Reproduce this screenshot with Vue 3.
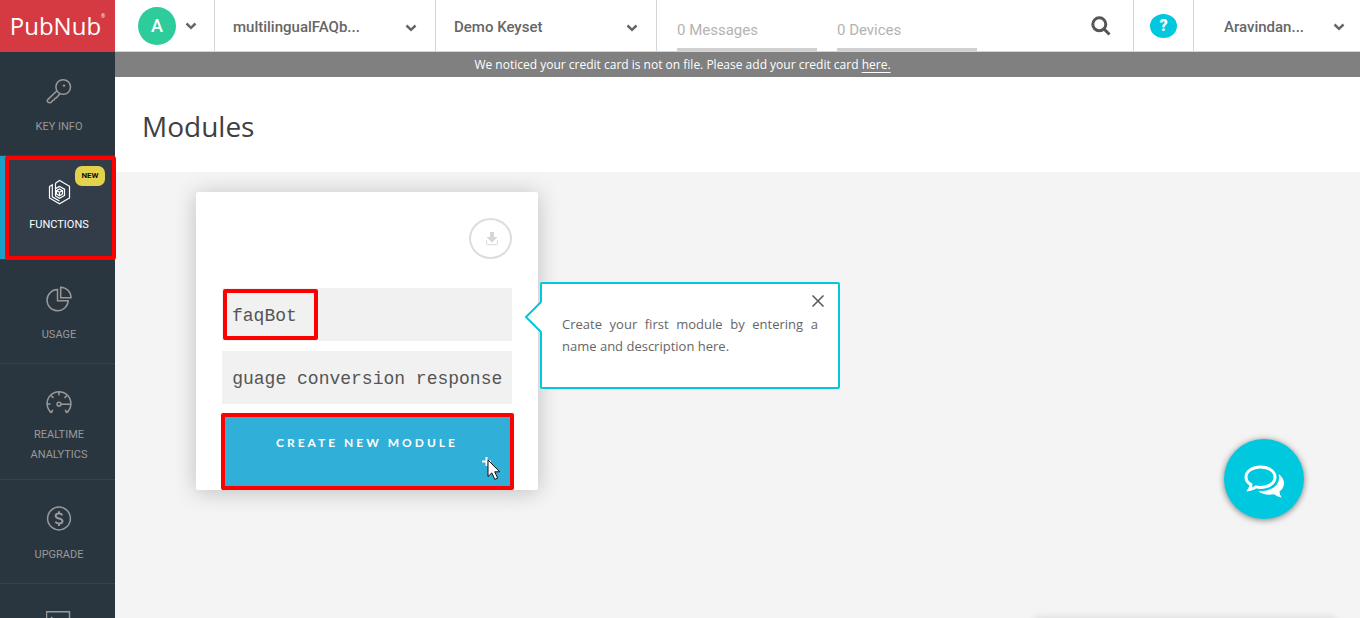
<script setup>
import { onMounted, ref } from 'vue'

const appName = ref('multilingualFAQb...')
const keyset = ref('Demo Keyset')
const moduleName = ref('faqBot')
const description = ref('Multi language conversion response')
const descriptionField = ref(null)
const tipOpen = ref(true)

const metrics = ['0 Messages', '0 Devices']

// Keep the end of a long description in view.
onMounted(() => {
  descriptionField.value.scrollLeft = descriptionField.value.scrollWidth
})
</script>

<template>
  <div class="shell">
    <aside class="sidebar">
      <a class="logo" href="#">PubNub<sup>®</sup></a>
      <nav>
        <a class="item" href="#">
          <svg class="icon" viewBox="0 0 26 26">
            <circle cx="17.2" cy="9" r="7.3" />
            <circle cx="18" cy="7.6" r="1.2" class="solid" />
            <path d="M11 12.8 2 21.4c-1.3 1.3-.7 3 .8 3.2 1.3.2 2 .2 2.7-.5l1.2-1.700 1.3-.4 1-1.700 1.400-.5 3.700-4.200" />
          </svg>
          <span>KEY INFO</span>
        </a>
        <a class="item active tight" href="#">
          <svg class="icon" viewBox="0 0 26 26">
            <path d="M9.500 4.200V17l4 2.300 5-2.800v-6.300l-5-2.800-4 2.200M9.500 4.200 13.500 1.500 23.500 7.300v11.600l-10 5.800L3.500 19V7.500l2.800-1.700v12l7.200 4.100" />
            <path d="m13.500 10 3 1.600v3.400l-3 1.700-3-1.700v-3.400zM10.500 11.600l3 1.700 3-1.700M13.500 13.300v3.400" />
          </svg>
          <span>FUNCTIONS</span>
          <b class="badge">NEW</b>
        </a>
        <a class="item" href="#">
          <svg class="icon" viewBox="0 0 26 26">
            <path d="M11.500 3.600A10.600 10.600 0 1 0 22.200 14.800H11.500z" />
            <path d="M14.700 1.200v10.500H25A10.500 10.500 0 0 0 14.700 1.200z" />
          </svg>
          <span>USAGE</span>
        </a>
        <a class="item mid" href="#">
          <svg class="icon" viewBox="0 0 26 26">
            <path d="M5.500 22.800A11.900 11.900 0 1 1 20.500 22.800M13 2v3.500M5.300 5.700l2.200 2.200M20.700 5.700l-2.200 2.200M1.200 14h3.300M5.500 22.800l1.200-3M20.500 22.800l-1.200-3M15 14.200h10" />
            <circle cx="13" cy="14.200" r="1.900" />
          </svg>
          <span>REALTIME ANALYTICS</span>
        </a>
        <a class="item" href="#">
          <svg class="icon" viewBox="0 0 26 26">
            <circle cx="13" cy="12.500" r="11.400" />
            <path class="bold" d="M16.300 9.400c-.6-1.200-1.800-1.800-3.300-1.800-2 0-3.300.9-3.300 2.400 0 3.400 6.800 1.600 6.800 5.100 0 1.500-1.400 2.500-3.500 2.500-1.700 0-3-.6-3.600-1.900M13 5.300v2.300M13 17.500v2.400" />
          </svg>
          <span>UPGRADE</span>
        </a>
        <a class="item" href="#" aria-label="Console">
          <svg class="icon" viewBox="0 0 26 26">
            <path d="M.5 1.700h23v18H.5zM5 7l3 3-3 3" />
          </svg>
        </a>
      </nav>
    </aside>

    <div class="page">
      <header class="topbar">
        <button class="user" aria-label="Profile">
          <span class="avatar">A</span>
          <svg class="chevron" viewBox="0 0 12 8"><path d="m1.500 1.500 4.500 4.300 4.500-4.300" /></svg>
        </button>
        <div class="picker">
          <select v-model="appName" aria-label="App"><option>multilingualFAQb...</option></select>
          <svg class="chevron" viewBox="0 0 12 8"><path d="m1.500 1.500 4.500 4.300 4.500-4.300" /></svg>
        </div>
        <div class="picker">
          <select v-model="keyset" aria-label="Keyset"><option>Demo Keyset</option></select>
          <svg class="chevron" viewBox="0 0 12 8"><path d="m1.500 1.500 4.500 4.300 4.500-4.300" /></svg>
        </div>
        <div class="metrics">
          <div v-for="m in metrics" :key="m" class="metric">{{ m }}</div>
        </div>
        <button class="search" aria-label="Search">
          <svg viewBox="0 0 20 20"><circle cx="8.300" cy="8.300" r="6.500" /><path d="m13 13 5.500 5.500" /></svg>
        </button>
        <button class="help" aria-label="Help"><span>?</span></button>
        <button class="account">
          Aravindan...
          <svg class="chevron" viewBox="0 0 12 8"><path d="m1.500 1.500 4.500 4.300 4.500-4.300" /></svg>
        </button>
      </header>

      <p class="notice">We noticed your credit card is not on file. Please add your credit card <a href="#">here.</a></p>

      <div class="title"><h1>Modules</h1></div>

      <main>
        <form class="card" @submit.prevent>
          <button type="button" class="import" aria-label="Import module">
            <svg viewBox="0 0 12 14">
              <path class="solid" d="M4 0h4v5h3.500L6 10.500.5 5H4z" />
              <path d="M.600 8.500v3.200q0 1 1 1h8.800q1 0 1-1V8.500" />
            </svg>
          </button>
          <div class="field marked-name">
            <input v-model="moduleName" aria-label="Module name" />
          </div>
          <div class="field">
            <input ref="descriptionField" v-model="description" aria-label="Module description" />
          </div>
          <button class="create">
            <span>CREATE NEW MODULE</span>
            <svg class="plus" viewBox="0 0 9 9"><path d="M4.500 0v9M0 4.500h9" /></svg>
            <svg class="cursor" viewBox="0 0 14 22">
              <path d="M1 1v16.500l3.800-3.600 3 6.500 2.900-1.300-3-6.300h5z" />
            </svg>
          </button>

          <div v-if="tipOpen" class="tip">
            <svg class="arrow" viewBox="0 0 18 30"><path class="fill" d="M18 0 2 15l16 15z" /><path d="M17 0 2 15l15 15" /></svg>
            <button type="button" class="close" aria-label="Close" @click="tipOpen = false">
              <svg viewBox="0 0 12 12"><path d="m.5.5 11 11M11.500.5l-11 11" /></svg>
            </button>
            <p>Create your first module by entering a name and description here.</p>
          </div>
        </form>
      </main>
    </div>

    <button class="chat" aria-label="Open chat">
      <svg viewBox="0 0 42 34">
        <path class="solid" d="M35.500 9c3.700 2.500 5.700 6 5.500 9.700-.2 3.300-2 6-4.500 8 .1 2 .9 3.800 2.200 5.800-3.300-.5-5.700-1.800-7.600-3.300-6 1.200-12 .2-15.800-2.900 11.500.5 23.500-5.500 20.200-17.300z" />
        <path d="M17.500 2c8.200 0 14.500 4.300 14.500 10.200s-6.300 10.200-14.500 10.200c-1.600 0-3-.1-4.500-.5-2 1.500-4.300 2.300-6.700 2.600 1-1.500 1.700-3.100 1.700-4.900C4.900 17.900 3 15.400 3 12.200 3 6.300 9.300 2 17.500 2z" />
      </svg>
    </button>
    <div class="dock"></div>
  </div>
</template>

<style>
body {
  margin: 0;
  background: #f4f4f4;
}
</style>

<style scoped>
*,
::after {
  box-sizing: border-box;
}
.shell {
  display: flex;
  height: 100vh;
  overflow: hidden;
  font-family: Roboto, "Liberation Sans", sans-serif;
  color: #555;
}
button,
select,
input {
  margin: 0;
  padding: 0;
  border: 0;
  border-radius: 0;
  background: none;
  color: inherit;
  font: inherit;
  outline: 0;
}
svg {
  display: block;
  fill: none;
  stroke: currentColor;
}
.solid {
  fill: currentColor;
  stroke: none;
}

/* Sidebar */
.sidebar {
  flex: none;
  width: 115px;
  background: #2a363f;
}
.logo {
  display: flex;
  justify-content: center;
  height: 52px;
  background: #d53a42;
  color: #fff;
  font: 24px/52px "Open Sans", sans-serif;
  text-decoration: none;
}
.logo sup {
  font-size: 5px;
  line-height: 32px;
}
.item {
  position: relative;
  display: flex;
  flex-direction: column;
  align-items: center;
  gap: 13px;
  min-height: 104px;
  padding: 26px 23px 14px 26px;
  border-bottom: 1px solid #35434d;
  color: #999;
  font-size: 11px;
  line-height: 20px;
  text-align: center;
  text-decoration: none;
}
.icon {
  width: 26px;
  height: 26px;
  stroke-width: 1.5;
}
.bold {
  stroke-width: 2;
}
.tight {
  gap: 10px;
  padding-top: 23px;
}
.mid {
  gap: 9px;
}
.active {
  background: #333d4a;
  box-shadow: inset 6px 0 #1b9fc7;
  color: #fff;
}
.active .icon {
  stroke-width: 1.2;
}
.active::after {
  content: "";
  position: absolute;
  inset: 0 -1px -1px 5px;
  border: 4px solid #fe0000;
  border-radius: 3px;
}
.badge {
  position: absolute;
  top: 10px;
  right: 10px;
  width: 30px;
  border-radius: 7px;
  background: #e3d24b;
  color: #111;
  font-size: 8px;
}

/* Top bar */
.page {
  flex: 1;
  min-width: 0;
}
.topbar {
  display: flex;
  height: 52px;
  border-bottom: 1px solid #d5d5d5;
  background: #fff;
  font-size: 15px;
  font-weight: 500;
  color: #666;
}
.chevron {
  flex: none;
  width: 12px;
  height: 8px;
  stroke-width: 2.5;
}
.user {
  display: flex;
  align-items: center;
  gap: 9px;
  width: 100px;
  padding-left: 23px;
  border-right: 1px solid #d5d5d5;
}
.avatar {
  width: 38px;
  border-radius: 50%;
  background: #2ecc9a;
  color: #fff;
  font-size: 18px;
  line-height: 38px;
}
.picker {
  position: relative;
  width: 221px;
  border-right: 1px solid #d5d5d5;
}
.picker select {
  width: 100%;
  height: 100%;
  padding: 2px 40px 0 18px;
  appearance: none;
}
.picker .chevron {
  position: absolute;
  top: 24px;
  right: 18px;
  pointer-events: none;
}
.metrics {
  display: flex;
  flex: 1;
  gap: 20px;
  padding-left: 20px;
}
.metric {
  width: 140px;
  padding-top: 9px;
  border-bottom: 3px solid #d0d0d0;
  color: #b3b3b3;
  font-size: 15px;
  font-weight: 400;
  line-height: 42px;
}
.search {
  width: 64px;
  color: #555;
}
.search svg {
  width: 20px;
  height: 20px;
  margin: auto;
  stroke-width: 3;
}
.help {
  width: 61px;
  border: solid #d5d5d5;
  border-width: 0 1px;
}
.help span {
  display: block;
  width: 27px;
  margin: 0 auto;
  border-radius: 50%;
  background: #00c8de;
  color: #fff;
  font-size: 16px;
  font-weight: 900;
  line-height: 24px;
}
.account {
  display: flex;
  align-items: center;
  justify-content: space-between;
  width: 166px;
  padding: 2px 15px 0 30px;
}

.notice {
  margin: 0;
  padding: 1px 110px 0 0;
  background: #808080;
  color: #fff;
  font: 12px/24px "Open Sans", sans-serif;
  text-align: center;
}
.notice a {
  color: inherit;
  text-underline-offset: 3px;
}
.title {
  padding: 29px 27px 26px;
  background: #fff;
}
h1 {
  margin: 0;
  color: #404043;
  font: 28px/40px "Open Sans", sans-serif;
}

/* Module card */
main {
  padding: 20px 81px;
}
.card {
  position: relative;
  display: flex;
  flex-direction: column;
  gap: 10px;
  width: 342px;
  padding: 26px 26px 0;
  border-radius: 2px;
  background: #fff;
  box-shadow: 0 2px 22px rgba(0, 0, 0, 0.22);
}
.import {
  display: grid;
  place-items: center;
  align-self: flex-end;
  width: 43px;
  height: 41px;
  margin-bottom: 19px;
  padding-left: 2px;
  border: 2px solid #ddd;
  border-radius: 50%;
  color: #d5d5d5;
}
.import svg {
  width: 12px;
  height: 14px;
}
.field {
  position: relative;
}
.field input {
  display: block;
  width: 100%;
  height: 53px;
  padding: 2px 10px 0;
  background: #f1f1f1;
  color: #555;
  font: 18px "Liberation Mono", monospace;
}
.marked-name::after {
  content: "";
  position: absolute;
  inset: 1px auto 1px 1px;
  width: 95px;
  border: 4px solid #fe0000;
  border-radius: 2px;
  pointer-events: none;
}
.create {
  position: relative;
  display: flex;
  flex-direction: column;
  align-items: center;
  height: 76px;
  padding-top: 19px;
  background: #30afd8;
  color: #fff;
  font-family: Lato, sans-serif;
  font-size: 12px;
  font-weight: 700;
  letter-spacing: 3px;
  line-height: 20px;
}
.create::after {
  content: "";
  position: absolute;
  inset: -1px -2px 0 -1px;
  border: 4px solid #fe0000;
  border-radius: 2px;
}
.plus {
  align-self: flex-end;
  width: 9px;
  height: 9px;
  margin: 4px 21px 0 0;
  stroke-width: 2;
}
.cursor {
  position: absolute;
  top: 45px;
  right: 11px;
  width: 14px;
  height: 22px;
  fill: #fff;
  stroke: #111;
}

/* Tooltip */
.tip {
  position: absolute;
  top: 90px;
  left: 344px;
  width: 300px;
  padding: 29px 20px 30px;
  border: 2px solid #00c8de;
  border-radius: 2px;
  background: #fff;
}
.tip p {
  margin: 0;
  color: #666;
  font: 13px/22px "Open Sans", sans-serif;
  text-align: justify;
}
.arrow {
  position: absolute;
  top: 18px;
  left: -18px;
  width: 18px;
  height: 30px;
  stroke: #00c8de;
  stroke-width: 2;
}
.fill {
  fill: #fff;
  stroke: none;
}
.close {
  position: absolute;
  top: 11px;
  right: 14px;
}
.close svg {
  width: 12px;
  height: 12px;
  stroke-width: 1.5;
}

.chat {
  position: fixed;
  right: 56px;
  bottom: 99px;
  width: 80px;
  height: 80px;
  border-radius: 50%;
  background: #00c8de;
  color: #fff;
  box-shadow: 0 1px 6px rgba(0, 0, 0, 0.5);
}
.chat svg {
  width: 42px;
  height: 34px;
  margin: 6px auto 0;
  stroke-width: 3;
}
.dock {
  position: fixed;
  right: 25px;
  top: 100%;
  width: 300px;
  height: 20px;
  box-shadow: 0 0 8px rgba(0, 0, 0, 0.12);
}
</style>
